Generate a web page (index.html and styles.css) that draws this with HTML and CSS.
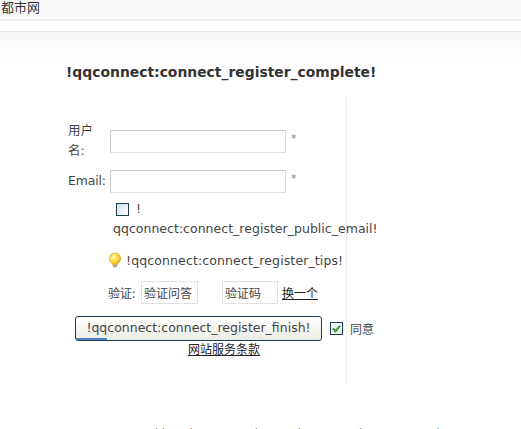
FILE: index.html
```html
<!DOCTYPE html>
<html lang="zh">
<head>
<meta charset="utf-8">
<title>都市网</title>
<link rel="stylesheet" href="styles.css">
</head>
<body>
<div class="topbar">都市网</div>
<div class="band"></div>
<div class="wrap">
  <h1 class="title">!qqconnect:connect_register_complete!</h1>
  <form class="form">
    <div class="row row-user">
      <label class="label">用户名:</label>
      <input class="field" type="text">
      <span class="star">*</span>
    </div>
    <div class="row row-email">
      <label class="label">Email:</label>
      <input class="field" type="text">
      <span class="star">*</span>
    </div>
    <div class="public">
      <div class="public-top"><span class="check"></span><span>!</span></div>
      <div class="public-text">qqconnect:connect_register_public_email!</div>
    </div>
    <div class="tips">
      <svg class="bulb" viewBox="0 0 14 16" width="14" height="16"><defs><radialGradient id="b" cx="0.4" cy="0.35" r="0.7"><stop offset="0" stop-color="#fff6a8"/><stop offset="0.6" stop-color="#fbd438"/><stop offset="1" stop-color="#dd9f12"/></radialGradient></defs><path d="M7 1a5.6 5.6 0 0 0-3.2 10.2c.6.5.8 1 .8 1.6h4.8c0-.6.2-1.1.8-1.6A5.6 5.6 0 0 0 7 1z" fill="url(#b)" stroke="#d9a520" stroke-width=".7"/><rect x="4.8" y="12.8" width="4.4" height="2.4" rx="1" fill="#a9a9a0"/></svg>
      <span class="tips-text">!qqconnect:connect_register_tips!</span>
    </div>
    <div class="verify">
      <span class="verify-label">验证:</span>
      <span class="box box-q">验证问答</span>
      <span class="box box-c">验证码</span>
      <a class="link" href="#">换一个</a>
    </div>
    <div class="submit">
      <button class="btn" type="button">!qqconnect:connect_register_finish!</button>
      <span class="agree"><svg class="tick" viewBox="0 0 13 13" width="13" height="13"><rect x=".5" y=".5" width="12" height="12" fill="#eef2f5" stroke="#1e3f50"/><path d="M3 6.5l2.5 2.7L10 3.8" fill="none" stroke="#3a9a22" stroke-width="2"/></svg><span>同意</span></span>
    </div>
    <div class="terms"><a class="link" href="#">网站服务条款</a></div>
  </form>
  <div class="clip">Powered by Discuz! X2 Licensed Community Forum Help</div>
</div>
</body>
</html>
```
FILE: styles.css
```css
* { box-sizing: border-box; }
html, body { margin: 0; height: 429px; overflow: hidden; }
body { background: #fff; color: #444; font: 12.5px/20px "DejaVu Sans", "Noto Sans CJK SC", sans-serif; }
.topbar { height: 21px; padding-left: 1px; background: #fafafa; border-bottom: 2px solid #eee; font: 13px/13px "Noto Sans CJK SC", sans-serif; color: #333; }
.band { height: 11px; border-bottom: 1px solid #e8e8e8; }
.wrap { height: 397px; padding: 0 0 0 66px; background: linear-gradient(#f7f7f7, #fff 30px); overflow: hidden; }
.title { margin: 0; padding-top: 30px; height: 65px; font: bold 13.9px/20px "DejaVu Sans", sans-serif; color: #333; }
.form { width: 281px; height: 287px; border-right: 1px solid #ececec; }
.row { display: flex; align-items: flex-start; }
.row-user { padding-top: 24px; }
.row-email { padding-top: 9px; }
.label { width: 44px; padding-left: 2px; font-family: "DejaVu Sans", "Noto Sans CJK SC", sans-serif; }
.row-user .label { width: 36px; margin-right: 8px; }
.row-email .label { width: 44px; padding-left: 2px; line-height: 22px; letter-spacing: -0.2px; white-space: nowrap; }
.field { width: 176px; height: 23px; border: 1px solid #ccc; border-color: #ccc #e0e0e0 #e0e0e0 #ccc; background: #fff; padding: 0; }
.row-user .field { margin-top: 9px; }
.star { margin-left: 5px; line-height: 12px; margin-top: 3px; color: #888; font-size: 11px; }
.row-user .star { margin-top: 12px; }
.public { padding: 9px 0 0 48px; white-space: nowrap; }
.public-top { display: flex; align-items: center; gap: 7px; padding-left: 2px; height: 14px; }
.check { width: 13px; height: 13px; border: 1px solid #1e3f50; background: linear-gradient(135deg, #d5dfe8, #fff); }
.public-text { margin-top: 5px; line-height: 16px; margin-left: -1px; letter-spacing: 0.02px; }
.tips { display: flex; align-items: center; gap: 4px; margin-left: 42px; margin-top: 15px; height: 16px; white-space: nowrap; }
.tips-text { letter-spacing: 0.12px; position: relative; top: 1px; }
.bulb { flex: none; }
.verify { display: flex; align-items: center; margin-left: 42px; margin-top: 13px; height: 23px; white-space: nowrap; }
.verify-label { width: 33px; font: 12px/20px "Noto Sans CJK SC", sans-serif; }
.box { display: block; height: 23px; border: 1px solid #e2e2e2; padding-left: 2px; line-height: 22px; font: 12px/21px "Noto Sans CJK SC", sans-serif; }
.box-q { width: 57px; }
.box-c { width: 56px; margin-left: 24px; }
.verify .link { margin-left: 4px; }
.link { color: #222; text-decoration: underline; font: 12px/16px "Noto Sans CJK SC", sans-serif; }
.submit { display: flex; align-items: center; margin-left: 9px; margin-top: 12px; height: 25px; white-space: nowrap; }
.btn { flex: none; width: 247px; height: 25px; padding: 0 0 2px; border: 1px solid #1e3f50; border-radius: 3px; background: linear-gradient(#fff, #f4f4ee 60%, #ecece6); color: #444; font: 12.5px/20px "DejaVu Sans", sans-serif; position: relative; overflow: hidden; }
.btn::after { content: ""; position: absolute; left: 0; bottom: 0; width: 31px; height: 2px; background: #4f82c4; }
.agree { display: flex; align-items: center; gap: 7px; margin-left: 8px; font: 12px/20px "Noto Sans CJK SC", sans-serif; }
.tick { flex: none; }
.terms { margin-left: 122px; line-height: 16px; white-space: nowrap; }
.clip { height: 20px; margin: 40px 0 0 41px; font: 12px/20px "DejaVu Sans", sans-serif; white-space: nowrap; color: #777; }
```
